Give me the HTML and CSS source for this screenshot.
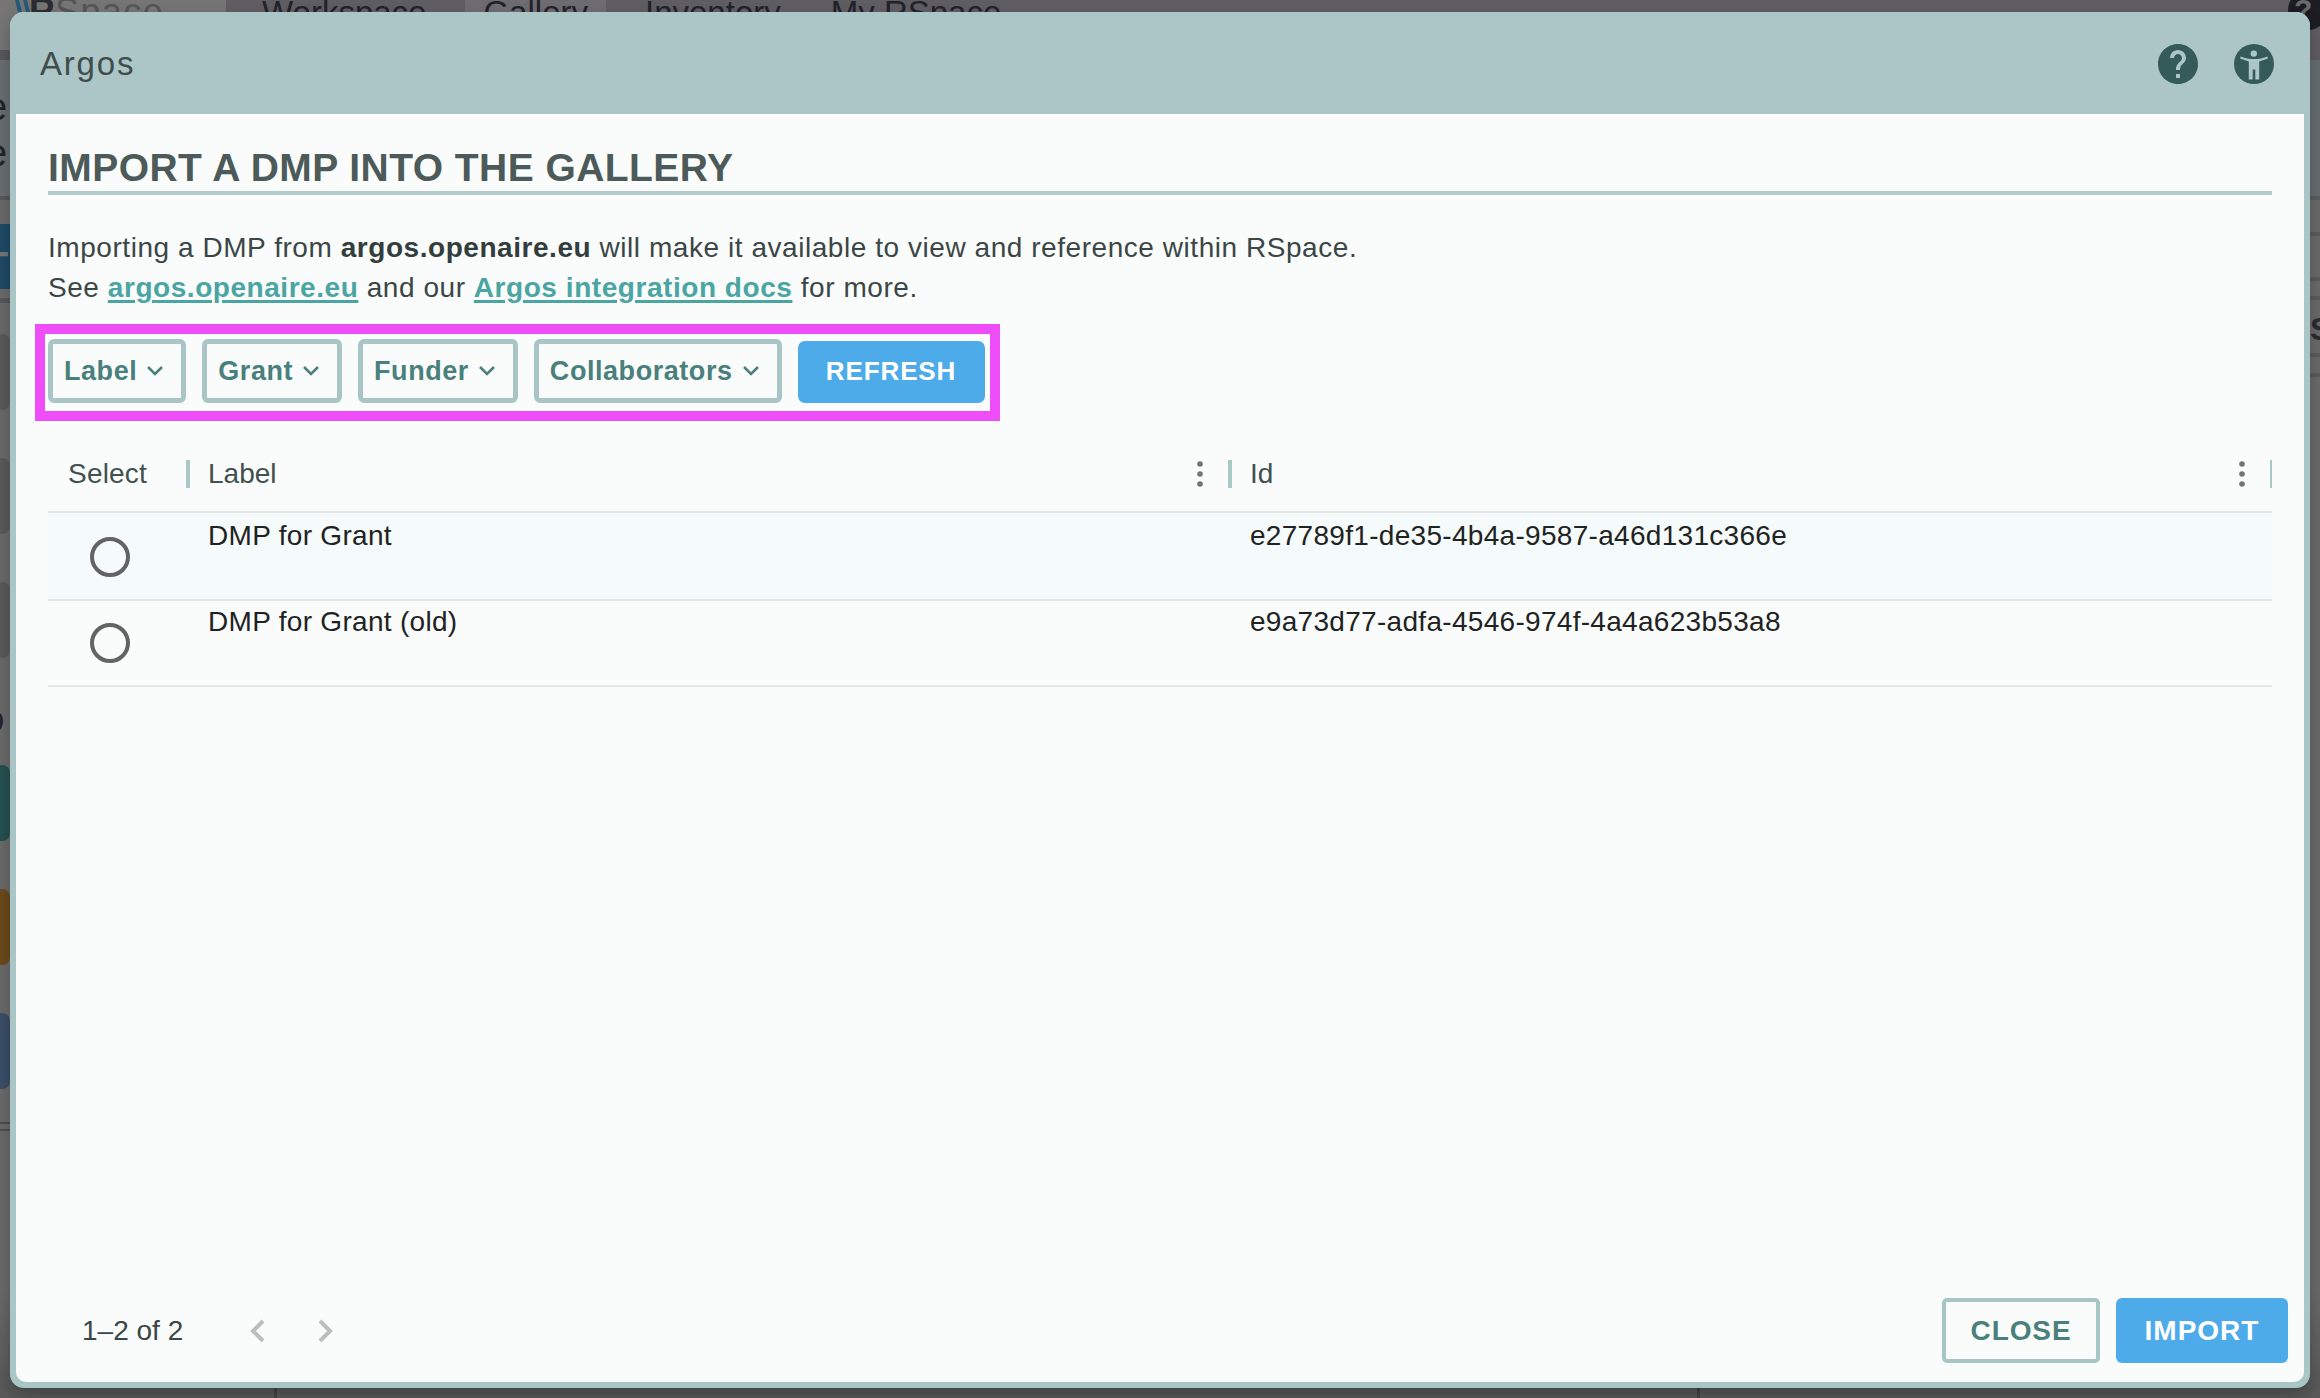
FILE: index.html
```html
<!DOCTYPE html>
<html lang="en">
<head>
<meta charset="utf-8">
<title>Argos</title>
<link rel="stylesheet" href="styles.css">
</head>
<body>
<div class="app">
  <div class="topbar">
    <div class="logo">
      <svg class="logo-mark" viewBox="0 0 22 12" width="22" height="12"><path d="M3 0h4l3 12H6zM11 0h4l3 12h-4z" fill="#26587a"/></svg>
      <span class="logo-r">R</span><span class="logo-space">Space</span>
    </div>
    <nav class="nav">
      <span class="tab">Workspace</span>
      <span class="tab tab-active">Gallery</span>
      <span class="tab tab-tight">Inventory</span>
      <span class="tab">My RSpace</span>
    </nav>
    <span class="help-bubble">?</span>
  </div>
  <div class="rail rail-left">
    <i class="rl b1"></i><i class="rl t1"><span>e</span><span>e</span></i><i class="rl b2"></i><i class="rl plus">+</i><i class="rl b3"></i>
    <i class="rl card"></i><i class="rl card"></i><i class="rl card"></i><i class="rl txt">D</i><i class="rl card teal"></i><i class="rl card amber"></i><i class="rl card navy"></i><i class="rl b4"></i><i class="rl txt2">E</i>
  </div>
  <div class="rail rail-right">
    <i class="rr r1"></i><i class="rr r2"></i><i class="rr r3"></i><i class="rr r4"></i><i class="rr letter">S</i><i class="rr r5"></i><i class="rr r6"></i>
  </div>
  <div class="bottom-lines"><i class="vline"></i><i class="vline"></i></div>
</div>

<div class="dialog">
  <header class="dialog-head">
    <span class="dialog-title">Argos</span>
    <div class="head-icons">
      <svg class="head-icon" viewBox="2 2 20 20" width="40" height="40"><path fill="#345a5a" d="M12 2C6.48 2 2 6.48 2 12s4.48 10 10 10 10-4.48 10-10S17.52 2 12 2zm1 17h-2v-2h2v2zm2.07-7.75l-.9.92C13.45 12.9 13 13.5 13 15h-2v-.5c0-1.1.45-2.1 1.17-2.83l1.24-1.26c.37-.36.59-.86.59-1.41 0-1.1-.9-2-2-2s-2 .9-2 2H8c0-2.21 1.79-4 4-4s4 1.79 4 4c0 .88-.36 1.68-.93 2.25z"/></svg>
      <svg class="head-icon" viewBox="0 0 40 40" width="40" height="40"><circle cx="20" cy="20" r="20" fill="#345a5a"/><circle cx="19.8" cy="9.6" r="3.2" fill="#acc6c7"/><path fill="#acc6c7" d="M6.5 12.5L13 14.4Q20 15.8 27 14.4L33.5 12.5L33.9 14.6L25.2 17.6V35.5H21.3V25.5H18.7V35.5H14.8V17.6L6.1 14.6Z"/></svg>
    </div>
  </header>
  <div class="dialog-body">
    <div class="content">
      <h1 class="heading">IMPORT A DMP INTO THE GALLERY</h1>
      <p class="intro">Importing a DMP from <strong>argos.openaire.eu</strong> will make it available to view and reference within RSpace.<br>See <a class="link" href="#">argos.openaire.eu</a> and our <a class="link" href="#">Argos integration docs</a> for more.</p>
      <div class="toolbar">
        <button class="filter">Label<svg class="chev" viewBox="0 0 20 12" width="20" height="12"><path d="M3 2l7 7 7-7" fill="none" stroke="#4a807c" stroke-width="2.6"/></svg></button>
        <button class="filter">Grant<svg class="chev" viewBox="0 0 20 12" width="20" height="12"><path d="M3 2l7 7 7-7" fill="none" stroke="#4a807c" stroke-width="2.6"/></svg></button>
        <button class="filter">Funder<svg class="chev" viewBox="0 0 20 12" width="20" height="12"><path d="M3 2l7 7 7-7" fill="none" stroke="#4a807c" stroke-width="2.6"/></svg></button>
        <button class="filter">Collaborators<svg class="chev" viewBox="0 0 20 12" width="20" height="12"><path d="M3 2l7 7 7-7" fill="none" stroke="#4a807c" stroke-width="2.6"/></svg></button>
        <button class="refresh">REFRESH</button>
        <div class="highlight"></div>
      </div>
      <div class="table">
        <div class="tr thead">
          <div class="th"><span class="th-text th-select">Select</span><i class="sep"></i></div>
          <div class="th"><span class="th-text">Label</span><svg class="kebab" viewBox="0 0 8 28" width="8" height="28"><circle cx="4" cy="4" r="2.8"/><circle cx="4" cy="14" r="2.8"/><circle cx="4" cy="24" r="2.8"/></svg><i class="sep"></i></div>
          <div class="th"><span class="th-text">Id</span><svg class="kebab kebab-last" viewBox="0 0 8 28" width="8" height="28"><circle cx="4" cy="4" r="2.8"/><circle cx="4" cy="14" r="2.8"/><circle cx="4" cy="24" r="2.8"/></svg><i class="sep sep-thin"></i></div>
        </div>
        <div class="tr row row-first">
          <div class="td td-radio"><i class="radio"></i></div>
          <div class="td">DMP for Grant</div>
          <div class="td">e27789f1-de35-4b4a-9587-a46d131c366e</div>
        </div>
        <div class="tr row row-second">
          <div class="td td-radio"><i class="radio"></i></div>
          <div class="td">DMP for Grant (old)</div>
          <div class="td">e9a73d77-adfa-4546-974f-4a4a623b53a8</div>
        </div>
      </div>
    </div>
    <footer class="foot">
      <div class="pager">
        <span class="count">1–2 of 2</span>
        <svg class="page-arrow" viewBox="0 0 16 24" width="16" height="24"><path d="M14 2L4 12l10 10" fill="none" stroke="#bdbdbd" stroke-width="4"/></svg>
        <svg class="page-arrow" viewBox="0 0 16 24" width="16" height="24"><path d="M2 2l10 10L2 22" fill="none" stroke="#bdbdbd" stroke-width="4"/></svg>
      </div>
      <div class="actions">
        <button class="btn-close">CLOSE</button>
        <button class="btn-import">IMPORT</button>
      </div>
    </footer>
  </div>
</div>
</body>
</html>
```
FILE: styles.css
```css
* { box-sizing: border-box; }
html, body { margin: 0; height: 100%; }
body {
  width: 2320px;
  height: 1398px;
  overflow: hidden;
  position: relative;
  background: #6a6a6a;
  font-family: "Liberation Sans", Arial, sans-serif;
}

/* dimmed application behind the dialog */
.app { position: absolute; inset: 0; overflow: hidden; background: linear-gradient(#6a6a6a 92%, #5a5a5a 99%); }
.topbar { display: flex; height: 50px; background: #757575; align-items: flex-start; }
.logo { width: 226px; display: flex; align-items: flex-start; padding-left: 12px; line-height: 24px; font-size: 36px; color: #2b2b30; }
.logo-mark { margin-right: -5px; }
.logo-r { font-weight: 700; }
.logo-space { color: #555559; letter-spacing: 1.4px; }
.nav { flex: 1; display: flex; gap: 21px; height: 60px; padding-left: 18px; background: #605d62; font-size: 33px; line-height: 26px; color: #22222a; }
.tab { padding: 0 18px; }
.tab-active { background: #6e6c70; }
.tab-tight { margin-right: -7px; }
.help-bubble { position: absolute; right: -8px; top: -10px; width: 40px; height: 40px; border-radius: 50%; background: #1c1c22; color: #6a6a6e; font-size: 30px; font-weight: 700; line-height: 40px; padding-left: 6px; }

.rail { position: absolute; top: 0; width: 10px; display: flex; flex-direction: column; font-style: normal; }
.rail i { display: block; font-style: normal; }
.rail-left { left: 0; padding-top: 50px; overflow: hidden; }
.rl.b1 { height: 10px; background: #58585c; }
.rl.t1 { height: 136px; background: #696e70; color: #20242c; font-size: 38px; line-height: 46px; padding-top: 24px; }
.rl.t1 span { display: block; margin-left: -14px; }
.rl.b2 { height: 4px; background: #58585c; margin-bottom: 24px; }
.rl.plus { height: 65px; background: #1f4a66; color: #757575; font-size: 60px; line-height: 60px; margin-left: -24px; width: 34px; overflow: hidden; }
.rl.b3 { height: 5px; background: #58585c; margin: 9px 0 31px; }
.rl.card { height: 76px; border-radius: 0 8px 8px 0; background: #5a5a5c; margin-bottom: 48px; }
.rl.txt { height: 30px; margin: 0 0 29px -20px; font-size: 34px; line-height: 30px; color: #25252a; width: 30px; overflow: hidden; }
.rl.card.teal { background: #265050; }
.rl.card.amber { background: #6a4a1a; }
.rl.card.navy { background: #3a4e68; margin-bottom: 33px; }
.rl.b4 { height: 9px; border-top: 2px solid #4e4e4e; border-bottom: 2px solid #4e4e4e; margin-bottom: 45px; }
.rl.txt2 { height: 30px; font-size: 30px; line-height: 30px; color: #25252a; margin-left: -20px; width: 30px; overflow: hidden; }

.rail-right { right: 0; padding-top: 60px; }
.rr.r1 { height: 136px; background: #666d70; }
.rr.r2 { height: 4px; background: #5c5c5c; margin-bottom: 32px; }
.rr.r3 { height: 4px; background: #5c5c5c; margin-bottom: 60px; }
.rr.r4 { height: 4px; background: #5c5c5c; margin: 0 0 15px; box-shadow: 0 -19px 0 #5c5c5c; }
.rr.letter { height: 28px; margin: 0 0 10px; font-size: 32px; font-weight: 700; line-height: 28px; color: #2a2a30; }
.rr.r5 { height: 4px; background: #5c5c5c; margin-bottom: 16px; }
.rr.r6 { height: 4px; background: #5c5c5c; }

.bottom-lines { position: absolute; left: 274px; top: 1388px; display: flex; gap: 1420px; }
.vline { width: 3px; height: 10px; background: #464646; }

/* dialog */
.dialog {
  position: absolute;
  left: 10px;
  top: 12px;
  width: 2300px;
  height: 1376px;
  display: flex;
  flex-direction: column;
  background: #a9c5c5;
  border-radius: 14px;
  box-shadow: 0 8px 16px rgba(0, 0, 0, .25);
  overflow: hidden;
}
.dialog-head {
  height: 102px;
  flex: none;
  background: #acc6c7;
  display: flex;
  align-items: center;
  justify-content: space-between;
  padding: 1px 36px 0 30px;
}
.dialog-title { font-size: 33px; letter-spacing: 1.8px; color: #3f4d4d; }
.head-icons { display: flex; gap: 36px; }
.head-icon { display: block; }
.dialog-body {
  flex: 1;
  margin: 0 6px 6px;
  background: #fafcfc;
  border-radius: 0 0 10px 10px;
  display: flex;
  flex-direction: column;
  min-height: 0;
}
.content { padding: 30px 32px 0; flex: 1; }
.heading {
  margin: 0;
  height: 51px;
  line-height: 47px;
  font-size: 39px;
  font-weight: 700;
  letter-spacing: .45px;
  color: #4d5a5a;
  border-bottom: 4px solid #b3cdcb;
}
.intro { margin: 33px 0 0; font-size: 28px; line-height: 40px; letter-spacing: .55px; color: #3b4646; }
.intro strong { font-weight: 700; color: #333d3d; }
.link { color: #4aa5a3; font-weight: 700; text-decoration: underline; text-decoration-thickness: 3px; text-underline-offset: 3px; }

.toolbar { position: relative; display: inline-flex; gap: 16px; align-items: flex-end; margin-top: 31px; height: 64px; vertical-align: top; }
.filter {
  height: 64px;
  display: flex;
  align-items: center;
  padding: 0 16px 0 11px;
  background: transparent;
  border: 5px solid #a9c5c5;
  border-radius: 6px;
  font: 700 27px "Liberation Sans", Arial, sans-serif;
  letter-spacing: .55px;
  color: #4a807c;
}
.chev { margin-left: 8px; flex: none; }
.refresh {
  width: 187px;
  height: 62px;
  padding: 0 0 2px;
  border: 0;
  border-radius: 7px;
  background: #4dabea;
  color: #fff;
  font: 700 26px "Liberation Sans", Arial, sans-serif;
  letter-spacing: .9px;
}
.highlight { position: absolute; top: -15px; bottom: -18px; left: -13px; right: -15px; border: 10px solid #ee4df7; pointer-events: none; }

.table { margin-top: 32px; }
.tr { display: grid; grid-template-columns: 142px 1042px 1040px; }
.thead { height: 78px; border-bottom: 2px solid #e2e6e6; }
.th { display: flex; align-items: center; padding: 2px 0 0 18px; font-size: 28px; color: #42504f; }
.th-text { flex: 1; }
.th-select { margin-left: 2px; letter-spacing: .2px; }
.sep { width: 4px; height: 28px; background: #a9c9c6; flex: none; }
.sep-thin { width: 2px; }
.kebab { fill: #737373; margin-right: 24px; flex: none; }
.kebab-last { margin-right: 24px; }
.row { height: 86px; border-bottom: 2px solid #e2e6e6; }
.row-first { height: 88px; background: #f5fafa; padding-top: 1px; }
.td { padding-left: 18px; font-size: 28px; line-height: 44px; letter-spacing: .3px; color: #1f2323; }
.row-second .td { line-height: 42px; }
.td-radio { padding: 0 0 0 42px; display: flex; align-items: center; }
.radio { display: block; width: 40px; height: 40px; border: 4px solid #636363; border-radius: 50%; }

.foot { flex: none; height: 65px; margin-bottom: 19px; padding: 0 16px 0 66px; display: flex; justify-content: space-between; align-items: flex-start; }
.pager { display: flex; align-items: center; height: 65px; }
.count { font-size: 28px; color: #3b4646; width: 167px; padding-top: 1px; }
.page-arrow { margin-right: 53px; }
.actions { display: flex; gap: 16px; }
.btn-close {
  width: 158px;
  height: 65px;
  background: transparent;
  border: 4px solid #a9c6c6;
  border-radius: 5px;
  color: #4a807c;
  font: 700 28px "Liberation Sans", Arial, sans-serif;
  letter-spacing: .9px;
}
.btn-import {
  width: 172px;
  height: 65px;
  border: 0;
  border-radius: 6px;
  background: #4dabea;
  color: #fff;
  font: 700 28px "Liberation Sans", Arial, sans-serif;
  letter-spacing: 1px;
}
```
